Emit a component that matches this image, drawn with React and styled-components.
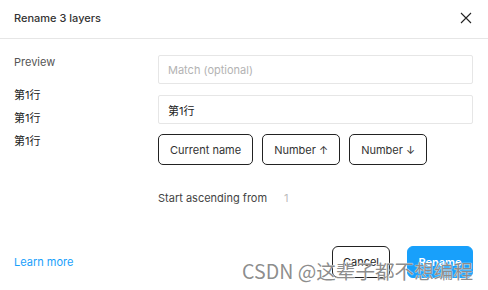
import React from 'react';
import styled, { createGlobalStyle } from 'styled-components';

const GlobalStyle = createGlobalStyle`
  html, body {
    margin: 0;
    padding: 0;
    background: #fff;
  }
  body {
    font-family: Inter, "Noto Sans CJK SC", sans-serif;
    -webkit-font-smoothing: antialiased;
  }
`;

function CloseIcon() {
  return (
    <svg width='12' height='12' viewBox='0 0 12 12'>
      <path d='M1 1 L11 11 M11 1 L1 11' stroke='#222' strokeWidth='1.1' fill='none' />
    </svg>
  );
}

const previewRows = ['第1行', '第1行', '第1行'];

function App() {
  return (
    <>
      <GlobalStyle />
      <Dialog>
        <Header>
          <Title>Rename 3 layers</Title>
          <CloseButton>
            <CloseIcon />
          </CloseButton>
        </Header>
        <Body>
          <PreviewColumn>
            <PreviewLabel>Preview</PreviewLabel>
            <PreviewList>
              {previewRows.map((row, i) => (
                <PreviewItem key={i}>{row}</PreviewItem>
              ))}
            </PreviewList>
          </PreviewColumn>
          <FormColumn>
            <Field placeholder='Match (optional)' />
            <Field defaultValue='第1行' />
            <ChipRow>
              <Chip>Current name</Chip>
              <Chip>Number ↑</Chip>
              <Chip>Number ↓</Chip>
            </ChipRow>
            <StartRow>
              <span>Start ascending from</span>
              <StartValue>1</StartValue>
            </StartRow>
          </FormColumn>
        </Body>
        <Footer>
          <LearnMore href='#'>Learn more</LearnMore>
          <Actions>
            <ActionButton>Cancel</ActionButton>
            <ActionButton primary>Rename</ActionButton>
          </Actions>
        </Footer>
        <Watermark>CSDN @这辈子都不想编程</Watermark>
      </Dialog>
    </>
  );
}

export default App;

const Dialog = styled.div`
  position: relative;
  width: 488px;
  height: 290px;
  display: flex;
  flex-direction: column;
  background: #fff;
  color: #333;
  font-size: 11px;
  overflow: hidden;
`;

const Header = styled.div`
  height: 38px;
  flex-shrink: 0;
  display: flex;
  align-items: center;
  justify-content: space-between;
  padding: 0 15px 0 14px;
  border-bottom: 1px solid #e6e6e6;
`;

const Title = styled.div`
  font-weight: 500;
  font-size: 11px;
  color: #333;
  margin-top: -3px;
`;

const CloseButton = styled.div`
  width: 30px;
  height: 30px;
  display: flex;
  align-items: center;
  justify-content: center;
  margin-right: -8px;
  margin-top: -3px;
`;

const Body = styled.div`
  flex: 1;
  display: flex;
  padding: 16px 15px 0 14px;
`;

const PreviewColumn = styled.div`
  width: 144px;
  display: flex;
  flex-direction: column;
`;

const PreviewLabel = styled.div`
  line-height: 14px;
  color: #555;
`;

const PreviewList = styled.div`
  display: flex;
  flex-direction: column;
  gap: 9px;
  margin-top: 19px;
`;

const PreviewItem = styled.div`
  line-height: 14px;
  color: #222;
`;

const FormColumn = styled.div`
  flex: 1;
  display: flex;
  flex-direction: column;
`;

const Field = styled.input`
  box-sizing: border-box;
  height: 29px;
  width: 100%;
  margin: 0 0 11px;
  padding: 0 9px;
  border: 1px solid #e6e6e6;
  border-radius: 2px;
  font-family: inherit;
  font-size: 11px;
  color: #222;
  outline: none;
  &::placeholder {
    color: #b3b3b3;
  }
`;

const ChipRow = styled.div`
  display: flex;
  gap: 9px;
  margin-top: -1px;
`;

const Chip = styled.div`
  box-sizing: border-box;
  height: 31px;
  padding: 0 11px;
  display: flex;
  align-items: center;
  border: 1px solid #222;
  border-radius: 5px;
  color: #333;
  font-size: 11px;
`;

const StartRow = styled.div`
  display: flex;
  align-items: center;
  gap: 17px;
  margin-top: 26px;
  line-height: 14px;
  color: #444;
`;

const StartValue = styled.span`
  color: #bbb;
`;

const Footer = styled.div`
  display: flex;
  align-items: center;
  justify-content: space-between;
  padding: 0 15px 12px 14px;
`;

const LearnMore = styled.a`
  color: #18a0fb;
  text-decoration: none;
  font-size: 11px;
`;

const Actions = styled.div`
  display: flex;
  gap: 17px;
`;

const ActionButton = styled.div`
  box-sizing: border-box;
  height: 32px;
  width: ${(props) => (props.primary ? '66px' : '58px')};
  display: flex;
  align-items: center;
  justify-content: center;
  border-radius: 6px;
  font-size: 11px;
  font-weight: ${(props) => (props.primary ? 600 : 400)};
  color: ${(props) => (props.primary ? '#fff' : '#222')};
  background: ${(props) => (props.primary ? '#18a0fb' : '#fff')};
  border: 1px solid ${(props) => (props.primary ? '#18a0fb' : '#222')};
`;

const Watermark = styled.div`
  position: absolute;
  right: 15px;
  bottom: 8px;
  font-family: "Noto Sans CJK SC", sans-serif;
  font-size: 19.6px;
  line-height: 22px;
  color: rgba(120, 120, 120, 0.85);
  text-shadow: 0 0 1px #fff, 0 0 1px #fff;
  pointer-events: none;
  white-space: nowrap;
`;
